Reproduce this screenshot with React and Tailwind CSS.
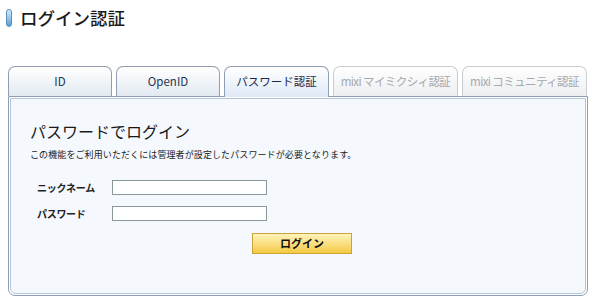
import React from "react";

const tabs = [
  { label: "ID", w: "w-[104px]", state: "on" },
  { label: "OpenID", w: "w-[104px]", state: "on" },
  { label: "パスワード認証", w: "w-[105px]", state: "active" },
  { label: "mixi マイミクシィ認証", w: "w-[125px]", state: "off" },
  { label: "mixi コミュニティ認証", w: "w-[125px]", state: "off" },
];

const Tab = ({ label, w, state }) => {
  const base =
    "h-[30px] flex items-center justify-center rounded-t-[7px] border border-b-0 text-[11.5px] whitespace-nowrap";
  if (state === "active") {
    return (
      <div
        className={`${base} ${w} h-[31px] -mb-px relative z-10 border-[#8d9fb6] bg-gradient-to-b from-white to-[#dfe9f6] text-[#1b2a48]`}
      >
        {label}
      </div>
    );
  }
  if (state === "off") {
    return (
      <div
        className={`${base} ${w} tracking-[-0.6px] border-[#c9cdd2] bg-gradient-to-b from-white to-[#eceef0] text-[#a5a9ae]`}
      >
        {label}
      </div>
    );
  }
  return (
    <div
      className={`${base} ${w} border-[#8e9db0] bg-gradient-to-b from-white to-[#e2e9f1] text-[#233554]`}
    >
      {label}
    </div>
  );
};

const Field = ({ label }) => (
  <div className="flex items-center h-[15px]">
    <span className="w-[82px] pl-[7px] text-[10px] font-bold tracking-[-0.3px] text-[#222]">{label}</span>
    <input
      type="text"
      className="w-[155px] h-[15px] bg-white border border-[#8a9898] outline-none"
    />
  </div>
);

export default function App() {
  return (
    <div
      className="w-[600px] h-[306px] bg-white overflow-hidden"
      style={{ fontFamily: '"Noto Sans CJK JP", "Liberation Sans", sans-serif' }}
    >
      <div className="flex items-center pl-[6px] pt-[8px] h-[27px]">
        <div className="w-[6px] h-[18px] rounded-[3px] border border-[#5a8fb8] bg-gradient-to-b from-[#d8ecfa] to-[#4f9fd6]" />
        <h1 className="ml-[8px] text-[17.5px] leading-none font-medium text-[#1a1a1a]">ログイン認証</h1>
      </div>

      <div className="flex items-end gap-[4px] pl-[8px] mt-[39px]">
        {tabs.map((t) => (
          <Tab key={t.label} {...t} />
        ))}
      </div>

      <div className="ml-[8px] w-[580px] h-[200px] rounded-b-[7px] border border-[#8d9fb6] p-px bg-white">
        <div className="h-full rounded-b-[6px] border border-[#b7c4d4] bg-[#f5f8fd] pl-[19px] pt-[24px]">
          <h2 className="text-[16px] leading-none text-[#1a1a1a]">パスワードでログイン</h2>
          <p className="mt-[11px] text-[9px] tracking-[0.1px] leading-none text-[#1a1a1a]">
            この機能をご利用いただくには管理者が設定したパスワードが必要となります。
          </p>
          <div className="mt-[21px] flex flex-col gap-[11px]">
            <Field label="ニックネーム" />
            <Field label="パスワード" />
          </div>
          <div className="mt-[8px] pl-[222px]">
            <button className="w-[100px] h-[21px] border border-[#c9a43a] bg-gradient-to-b from-[#fff3b8] to-[#f4c93c] text-[11px] font-bold text-[#111]">
              ログイン
            </button>
          </div>
        </div>
      </div>
    </div>
  );
}
